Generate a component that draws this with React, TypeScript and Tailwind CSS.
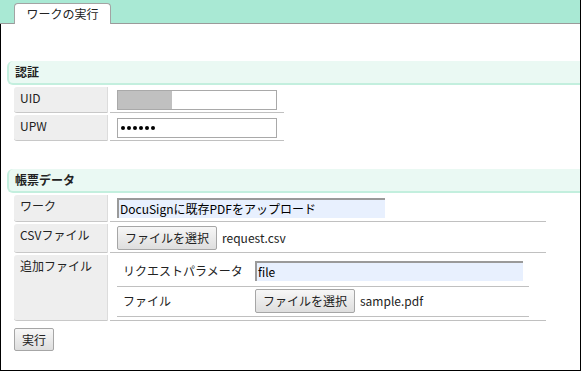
import React from "react";

const Heading = ({ title }: { title: string }) => (
  <div className="ml-[6px] h-[24px] flex items-center pl-[6px] bg-[#eaf9f3] border-l-[2px] border-b-[2px] border-[#c3efde] rounded-l-[6px] font-bold text-[12px] text-[#222]">
    {title}
  </div>
);

const Label = ({ children, h }: { children: React.ReactNode; h: string }) => (
  <td className={`${h} w-[94px] align-top pt-[2px] pl-[6px] bg-[#eeeeee] border-r border-r-[#dcdcdc] border-b border-b-[#c8c8c8] rounded-l-[3px] text-[#222]`}>
    {children}
  </td>
);

const FileButton = () => (
  <button className="h-[24px] w-[100px] px-[6px] border border-[#a6a6a6] rounded-[2px] bg-gradient-to-b from-[#f7f7f7] to-[#dedede] text-[12px] text-[#222] whitespace-nowrap">
    ファイルを選択
  </button>
);

export default function App() {
  return (
    <div className="w-[581px] h-[371px] flex flex-col border-r border-black bg-white font-['Meiryo','Noto_Sans_CJK_JP',sans-serif] text-[12px] leading-[18px] text-[#222]">
      {/* tab strip */}
      <div className="h-[24px] shrink-0 bg-[#a9e9d4] border-b border-[#9a9a9a] flex items-end pl-[14px]">
        <div className="h-[21px] w-[97px] -mb-px bg-white border border-b-0 border-[#a3a3a3] rounded-t-[4px] flex items-center justify-center text-[12px]">
          ワークの実行
        </div>
      </div>

      <div className="flex-1 border-l border-b border-black">
        <div className="mt-[37px]">
          <Heading title="認証" />
        </div>
        <table className="ml-[11px] border-separate border-spacing-[2px] w-[274px]">
          <tbody>
            <tr>
              <Label h="h-[26px]">UID</Label>
              <td className="border-b border-[#c0c0c0] pl-[7px] align-middle">
                <div className="w-[160px] h-[20px] border border-[#a9a9a9] bg-white">
                  <div className="w-[54px] h-full bg-[#c0c0c0]" />
                </div>
              </td>
            </tr>
            <tr>
              <Label h="h-[26px]">UPW</Label>
              <td className="border-b border-[#c0c0c0] pl-[7px] align-middle">
                <div className="w-[160px] h-[20px] border border-[#a9a9a9] bg-white flex items-center pl-[3px] gap-[2px]">
                  {[0, 1, 2, 3, 4, 5].map((i) => (
                    <span key={i} className="w-[4px] h-[4px] rounded-full bg-black" />
                  ))}
                </div>
              </td>
            </tr>
          </tbody>
        </table>

        <div className="mt-[26px]">
          <Heading title="帳票データ" />
        </div>
        <table className="ml-[11px] border-separate border-spacing-[2px] w-[536px]">
          <tbody>
            <tr>
              <Label h="h-[27px]">ワーク</Label>
              <td className="border-b border-[#c0c0c0] pl-[7px] align-middle">
                <div className="w-[268px] h-[20px] bg-[#e8f0fe] border-t-2 border-l-2 border-[#9a9a9a] flex items-center pl-[1px] text-black">
                  DocuSignに既存PDFをアップロード
                </div>
              </td>
            </tr>
            <tr>
              <Label h="h-[29px]">CSVファイル</Label>
              <td className="border-b border-[#c0c0c0] pl-[7px] align-middle">
                <div className="flex items-center gap-[5px]">
                  <FileButton />
                  <span>request.csv</span>
                </div>
              </td>
            </tr>
            <tr>
              <Label h="h-[66px]">追加ファイル</Label>
              <td className="border-b border-[#c0c0c0] pl-[7px] pt-[2px] pb-[3px] align-top">
                <table className="w-[412px] border-collapse">
                  <tbody>
                    <tr>
                      <td className="w-[138px] h-[29px] pl-[6px] border-b border-[#c0c0c0] align-middle">
                        リクエストパラメータ
                      </td>
                      <td className="border-b border-[#c0c0c0] align-middle">
                        <div className="w-[268px] h-[20px] bg-[#e8f0fe] border-t-2 border-l-2 border-[#9a9a9a] flex items-center pl-[1px] text-black">
                          file
                        </div>
                      </td>
                    </tr>
                    <tr>
                      <td className="h-[30px] pl-[6px] border-b border-[#c0c0c0] align-middle">
                        ファイル
                      </td>
                      <td className="border-b border-[#c0c0c0] align-middle">
                        <div className="flex items-center gap-[5px]">
                          <FileButton />
                          <span>sample.pdf</span>
                        </div>
                      </td>
                    </tr>
                  </tbody>
                </table>
              </td>
            </tr>
          </tbody>
        </table>

        <button className="ml-[13px] mt-[5px] h-[23px] w-[40px] border border-[#a6a6a6] rounded-[2px] bg-gradient-to-b from-[#f7f7f7] to-[#dedede] text-[12px] text-[#222]">
          実行
        </button>
      </div>
    </div>
  );
}
